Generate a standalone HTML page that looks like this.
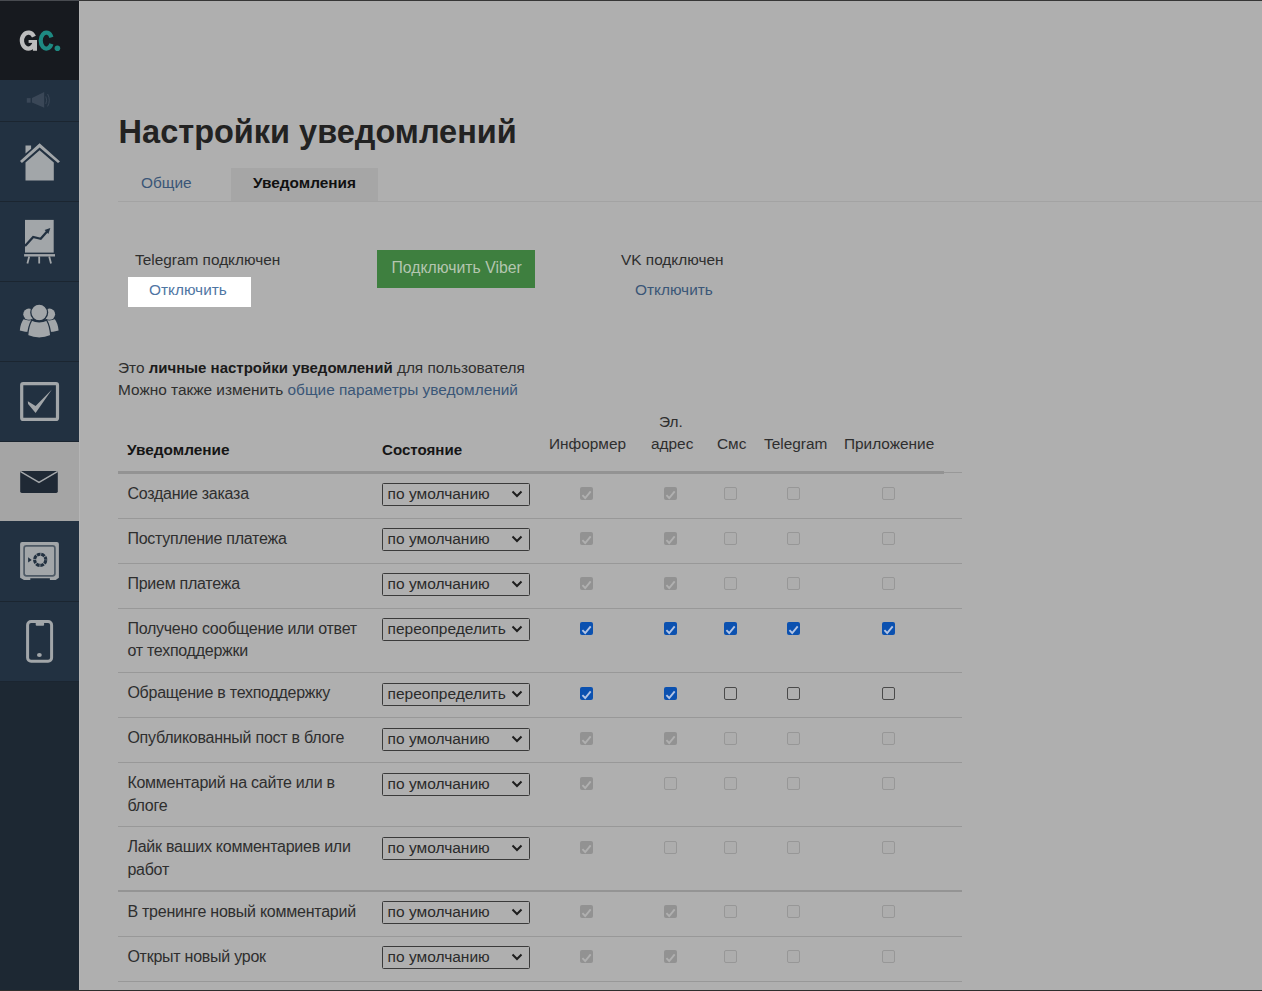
<!DOCTYPE html>
<html><head><meta charset="utf-8">
<style>
*{box-sizing:border-box;margin:0;padding:0}
html,body{width:1262px;height:991px;overflow:hidden;background:#afafaf;font-family:"Liberation Sans",sans-serif;color:#2e2e2e}
.abs{position:absolute;white-space:nowrap}
#topline{position:absolute;left:0;top:0;width:1262px;height:1px;background:#363636}
#botline{position:absolute;left:0;top:990px;width:1262px;height:1px;background:#2e2e2e}
#side{position:absolute;left:0;top:1px;width:79px;height:989px;background:#1d2833}
.si{position:absolute;left:0;width:79px;background:#223141;border-bottom:1px solid #1b2530}
.si svg{position:absolute;left:0;top:0}
#logo{position:absolute;left:0;top:1px;width:79px;height:79px;background:#171a1f}
#vline{position:absolute;left:79px;top:1px;width:1px;height:989px;background:#b5b5b5}
.t15{font-size:15.4px;line-height:18px}
.link{color:#3a5677}
.b{font-weight:bold;color:#161616}
b{color:#1a1a1a}
.hline{position:absolute;left:118px;width:844px;height:1px;background:#989898}
.sel{position:absolute;left:382px;width:148px;height:23px;border:1px solid #3a3a3a;border-radius:1.5px}
.sel span{position:absolute;left:4.6px;top:1px;font-size:15.5px;white-space:nowrap;color:#2a2a2a}
.sel svg{position:absolute;left:128.3px;top:6px}
.lab{font-size:16px;letter-spacing:-0.25px;line-height:22.5px;white-space:nowrap;color:#2e2e2e}
.cb{position:absolute;width:13px;height:13px;border-radius:2px}
.cbd{border:1px solid #979797;background:#adadad}
.cbdc{background:#929292}
.cbon{background:#0b51b0}
.cboff{border:1px solid #4a4a4a;background:#afafaf}
</style></head><body>
<div id="topline"></div><div style="position:absolute;left:0;top:0;width:79px;height:1px;background:#484b50"></div>
<div id="side"></div>
<div id="logo">
 <svg width="79" height="79" viewBox="0 1 79 79" style="position:absolute;left:0;top:0">
  <path d="M33.94 36.62 A6.45 7.95 0 1 0 34.66 42.25" fill="none" stroke="#bdbdbd" stroke-width="4.3"/>
  <rect x="28.6" y="40" width="8.4" height="2.9" fill="#bdbdbd"/>
  <rect x="32.9" y="40" width="4.1" height="10.75" fill="#bdbdbd"/>
  <path d="M51.42 37.35 A5.6 8 0 1 0 51.42 43.85" fill="none" stroke="#1e8a82" stroke-width="4.2"/>
  <circle cx="57.4" cy="48.3" r="2.8" fill="#1e8a82"/>
 </svg>
</div>
<div class="si" style="top:80px;height:42px">
 <svg width="79" height="41" viewBox="0 0 79 41">
  <rect x="26.8" y="18.1" width="3.8" height="4.6" fill="#3a4757"/>
  <path d="M32 18.1 L44.2 12.1 L44.2 27.7 L32 22.6 Z" fill="#3a4757"/>
  <path d="M45.8 16.5 Q47.6 20.2 45.8 24" fill="none" stroke="#3a4757" stroke-width="1"/>
  <path d="M47.6 14 Q51 20.2 47.6 26.4" fill="none" stroke="#3a4757" stroke-width="1"/>
 </svg>
</div>
<div class="si" style="top:122px;height:80px">
 <svg width="79" height="79" viewBox="0 0 79 79">
  <path d="M25.5 23.5 L31.1 23.5 L31.1 26.8 L25.5 31.5 Z" fill="#a2a6a9"/>
  <path d="M20 39.1 L39.6 21.3 L60 39.4 L58 41.1 L39.6 25.6 L21.9 41.1 Z" fill="#a2a6a9"/>
  <path d="M25.5 40.4 L39.6 28.3 L53.8 40.4 L53.8 58.5 L25.5 58.5 Z" fill="#a2a6a9"/>
 </svg>
</div>
<div class="si" style="top:202px;height:80px">
 <svg width="79" height="79" viewBox="0 0 79 79">
  <rect x="25" y="17.9" width="28.7" height="32.7" fill="#a2a6a9"/>
  <rect x="24.1" y="52.1" width="30.9" height="2.4" fill="#a2a6a9"/>
  <path d="M29.2 54.5 L27.4 61.5 M39.2 54.5 L39.2 61.5 M49.2 54.5 L51 61.5" stroke="#a2a6a9" stroke-width="1.8"/>
  <path d="M25 44 L33.2 35 L40.7 36.8 L47.5 29" fill="none" stroke="#223141" stroke-width="2.3"/>
  <path d="M50.3 26.1 L44.6 28.1 L48.4 31.9 Z" fill="#223141"/>
 </svg>
</div>
<div class="si" style="top:282px;height:80px">
 <svg width="79" height="79" viewBox="0 0 79 79">
  <circle cx="28.9" cy="32.2" r="5.6" fill="#a2a6a9"/>
  <circle cx="49.5" cy="32.2" r="5.6" fill="#a2a6a9"/>
  <path d="M23.6 37.3 Q28.9 39.5 33 37.5 L31 50 Q25 50 19.8 48.4 Q20.6 41 23.6 37.3 Z" fill="#a2a6a9"/>
  <path d="M54.8 37.3 Q49.5 39.5 45.4 37.5 L47.4 50 Q53.4 50 58.6 48.4 Q57.8 41 54.8 37.3 Z" fill="#a2a6a9"/>
  <path d="M31.7 38.2 Q39.2 41.6 46.7 38.2 Q50 44 50.8 53.6 Q39.2 58.6 27.6 53.6 Q28.4 44 31.7 38.2 Z" fill="#a2a6a9" stroke="#223141" stroke-width="1.3"/>
  <circle cx="39.2" cy="30.4" r="8.4" fill="#a2a6a9" stroke="#223141" stroke-width="1.3"/>
 </svg>
</div>
<div class="si" style="top:362px;height:80px">
 <svg width="79" height="79" viewBox="0 0 79 79">
  <rect x="21.7" y="21.6" width="35.8" height="35.8" rx="1.5" fill="none" stroke="#a2a6a9" stroke-width="3.2"/>
  <path d="M27.8 39.2 L35.6 44 L51.9 27.6 L35.6 51 L28.1 42 Z" fill="#a2a6a9"/>
 </svg>
</div>
<div class="si" style="top:442px;height:79px;background:#a5a5a5;border:none">
 <svg width="79" height="79" viewBox="0 0 79 79">
  <rect x="20.2" y="28.9" width="37.6" height="22" rx="1.6" fill="#1f2935"/>
  <path d="M20.6 29.6 L39 40.4 L57.4 29.6" fill="none" stroke="#a5a8ab" stroke-width="1.4"/>
 </svg>
</div>
<div class="si" style="top:521px;height:81px">
 <svg width="79" height="80" viewBox="0 0 79 80">
  <path d="M22.1 20.9 L56.9 20.9 Q58.9 20.9 58.9 22.9 L58.9 56.7 L55.7 58.9 L49.9 58.9 L49.9 57.2 L30.3 57.2 L30.3 58.9 L24 58.9 L20.1 56.7 L20.1 22.9 Q20.1 20.9 22.1 20.9 Z" fill="#a2a6a9"/>
  <rect x="24.1" y="24.9" width="30.8" height="29.9" rx="2.3" fill="none" stroke="#4e5a66" stroke-width="1.7"/>
  <circle cx="40.2" cy="38.8" r="5.6" fill="none" stroke="#223141" stroke-width="3.1" stroke-dasharray="3.65 0.75" stroke-dashoffset="4.025"/>
  <path d="M28.1 36.2 L28.1 41.6 L31.7 38.9 Z" fill="#223141"/>
 </svg>
</div>
<div class="si" style="top:602px;height:80px">
 <svg width="79" height="79" viewBox="0 0 79 79">
  <rect x="27.6" y="19.6" width="24" height="39.7" rx="3.5" fill="none" stroke="#a2a6a9" stroke-width="3"/>
  <path d="M35.7 19.8 L44.1 19.8 L44.1 22.8 Q44.1 23.8 43.1 23.8 L36.7 23.8 Q35.7 23.8 35.7 22.8 Z" fill="#a2a6a9"/>
  <ellipse cx="39.4" cy="52.9" rx="2.4" ry="2" fill="#a2a6a9"/>
 </svg>
</div>
<div id="vline"></div>
<div id="botline"></div>

<!-- main -->
<div class="abs b" style="left:118.6px;top:113.5px;font-size:32.5px;color:#222">Настройки уведомлений</div>
<div class="abs" style="left:231px;top:168px;width:147px;height:33px;background:#a6a6a6"></div>
<div class="abs t15 link" style="left:141px;top:174px">Общие</div>
<div class="abs t15 b" style="left:253px;top:174px;color:#111">Уведомления</div>
<div class="hline" style="left:118px;top:201px;width:1144px;background:#a3a3a3"></div>

<div class="abs t15" style="left:135px;top:251px">Telegram подключен</div>
<div class="abs" style="left:128px;top:277px;width:123px;height:30px;background:#fff"></div>
<div class="abs t15" style="left:149px;top:281px;color:#4f76a3">Отключить</div>
<div class="abs" style="left:377px;top:250px;width:158px;height:38px;background:#3e7f3f"></div>
<div class="abs t15" style="left:391.5px;top:259px;color:#b4c6b0;font-size:15.8px">Подключить Viber</div>
<div class="abs t15" style="left:621px;top:251px">VK подключен</div>
<div class="abs t15 link" style="left:635px;top:281px">Отключить</div>

<div class="abs t15" style="left:118px;top:359px">Это <b style="font-size:15px">личные настройки уведомлений</b> для пользователя</div>
<div class="abs t15" style="left:118px;top:381px">Можно также изменить <span class="link">общие параметры уведомлений</span></div>

<div class="abs t15 b" style="left:127px;top:441px">Уведомление</div>
<div class="abs t15 b" style="left:382px;top:441px;font-size:15.1px">Состояние</div>
<div class="abs t15" style="left:549px;top:435px">Информер</div>
<div class="abs t15" style="left:659px;top:413px">Эл.</div>
<div class="abs t15" style="left:651px;top:435px">адрес</div>
<div class="abs t15" style="left:717px;top:435px">Смс</div>
<div class="abs t15" style="left:764px;top:435px">Telegram</div>
<div class="abs t15" style="left:844px;top:435px">Приложение</div>
<div class="hline" style="left:118px;top:472px;width:844px"></div>
<div class="abs" style="left:118px;top:471px;width:826px;height:3px;background:#939393"></div>

<div id="rows">
<div class="hline" style="top:518px;height:1px"></div>
<div class="hline" style="top:563px;height:1px"></div>
<div class="hline" style="top:608px;height:1px"></div>
<div class="hline" style="top:672px;height:1px"></div>
<div class="hline" style="top:717px;height:1px"></div>
<div class="hline" style="top:762px;height:1px"></div>
<div class="hline" style="top:826px;height:1px"></div>
<div class="hline" style="top:890px;height:2px;background:#949494"></div>
<div class="hline" style="top:936px;height:1px"></div>
<div class="hline" style="top:981px;height:1px"></div>
<div class="abs lab" style="left:127.4px;top:483.0px">Создание заказа</div>
<div class="sel" style="top:483px"><span>по умолчанию</span><svg width="12" height="8" viewBox="0 0 12 8"><path d="M1.5 1.5 L6 6 L10.5 1.5" fill="none" stroke="#1e1e1e" stroke-width="2"/></svg></div>
<div class="cb cbdc" style="left:580px;top:487px"><svg width="13" height="13" viewBox="0 0 13 13"><path d="M2.4 7.2 L5.2 10 L10.7 3.4" fill="none" stroke="#b0b0b0" stroke-width="1.9"/></svg></div>
<div class="cb cbdc" style="left:664px;top:487px"><svg width="13" height="13" viewBox="0 0 13 13"><path d="M2.4 7.2 L5.2 10 L10.7 3.4" fill="none" stroke="#b0b0b0" stroke-width="1.9"/></svg></div>
<div class="cb cbd" style="left:724px;top:487px"></div>
<div class="cb cbd" style="left:787px;top:487px"></div>
<div class="cb cbd" style="left:882px;top:487px"></div>
<div class="abs lab" style="left:127.4px;top:528.0px">Поступление платежа</div>
<div class="sel" style="top:528px"><span>по умолчанию</span><svg width="12" height="8" viewBox="0 0 12 8"><path d="M1.5 1.5 L6 6 L10.5 1.5" fill="none" stroke="#1e1e1e" stroke-width="2"/></svg></div>
<div class="cb cbdc" style="left:580px;top:532px"><svg width="13" height="13" viewBox="0 0 13 13"><path d="M2.4 7.2 L5.2 10 L10.7 3.4" fill="none" stroke="#b0b0b0" stroke-width="1.9"/></svg></div>
<div class="cb cbdc" style="left:664px;top:532px"><svg width="13" height="13" viewBox="0 0 13 13"><path d="M2.4 7.2 L5.2 10 L10.7 3.4" fill="none" stroke="#b0b0b0" stroke-width="1.9"/></svg></div>
<div class="cb cbd" style="left:724px;top:532px"></div>
<div class="cb cbd" style="left:787px;top:532px"></div>
<div class="cb cbd" style="left:882px;top:532px"></div>
<div class="abs lab" style="left:127.4px;top:573.0px">Прием платежа</div>
<div class="sel" style="top:573px"><span>по умолчанию</span><svg width="12" height="8" viewBox="0 0 12 8"><path d="M1.5 1.5 L6 6 L10.5 1.5" fill="none" stroke="#1e1e1e" stroke-width="2"/></svg></div>
<div class="cb cbdc" style="left:580px;top:577px"><svg width="13" height="13" viewBox="0 0 13 13"><path d="M2.4 7.2 L5.2 10 L10.7 3.4" fill="none" stroke="#b0b0b0" stroke-width="1.9"/></svg></div>
<div class="cb cbdc" style="left:664px;top:577px"><svg width="13" height="13" viewBox="0 0 13 13"><path d="M2.4 7.2 L5.2 10 L10.7 3.4" fill="none" stroke="#b0b0b0" stroke-width="1.9"/></svg></div>
<div class="cb cbd" style="left:724px;top:577px"></div>
<div class="cb cbd" style="left:787px;top:577px"></div>
<div class="cb cbd" style="left:882px;top:577px"></div>
<div class="abs lab" style="left:127.4px;top:618px">Получено сообщение или ответ</div>
<div class="abs lab" style="left:127.4px;top:640px">от техподдержки</div>
<div class="sel" style="top:618px"><span>переопределить</span><svg width="12" height="8" viewBox="0 0 12 8"><path d="M1.5 1.5 L6 6 L10.5 1.5" fill="none" stroke="#1e1e1e" stroke-width="2"/></svg></div>
<div class="cb cbon" style="left:580px;top:622px"><svg width="13" height="13" viewBox="0 0 13 13"><path d="M2.4 7.2 L5.2 10 L10.7 3.4" fill="none" stroke="#b3c4e4" stroke-width="1.9"/></svg></div>
<div class="cb cbon" style="left:664px;top:622px"><svg width="13" height="13" viewBox="0 0 13 13"><path d="M2.4 7.2 L5.2 10 L10.7 3.4" fill="none" stroke="#b3c4e4" stroke-width="1.9"/></svg></div>
<div class="cb cbon" style="left:724px;top:622px"><svg width="13" height="13" viewBox="0 0 13 13"><path d="M2.4 7.2 L5.2 10 L10.7 3.4" fill="none" stroke="#b3c4e4" stroke-width="1.9"/></svg></div>
<div class="cb cbon" style="left:787px;top:622px"><svg width="13" height="13" viewBox="0 0 13 13"><path d="M2.4 7.2 L5.2 10 L10.7 3.4" fill="none" stroke="#b3c4e4" stroke-width="1.9"/></svg></div>
<div class="cb cbon" style="left:882px;top:622px"><svg width="13" height="13" viewBox="0 0 13 13"><path d="M2.4 7.2 L5.2 10 L10.7 3.4" fill="none" stroke="#b3c4e4" stroke-width="1.9"/></svg></div>
<div class="abs lab" style="left:127.4px;top:682.0px">Обращение в техподдержку</div>
<div class="sel" style="top:683px"><span>переопределить</span><svg width="12" height="8" viewBox="0 0 12 8"><path d="M1.5 1.5 L6 6 L10.5 1.5" fill="none" stroke="#1e1e1e" stroke-width="2"/></svg></div>
<div class="cb cbon" style="left:580px;top:687px"><svg width="13" height="13" viewBox="0 0 13 13"><path d="M2.4 7.2 L5.2 10 L10.7 3.4" fill="none" stroke="#b3c4e4" stroke-width="1.9"/></svg></div>
<div class="cb cbon" style="left:664px;top:687px"><svg width="13" height="13" viewBox="0 0 13 13"><path d="M2.4 7.2 L5.2 10 L10.7 3.4" fill="none" stroke="#b3c4e4" stroke-width="1.9"/></svg></div>
<div class="cb cboff" style="left:724px;top:687px"></div>
<div class="cb cboff" style="left:787px;top:687px"></div>
<div class="cb cboff" style="left:882px;top:687px"></div>
<div class="abs lab" style="left:127.4px;top:727.0px">Опубликованный пост в блоге</div>
<div class="sel" style="top:728px"><span>по умолчанию</span><svg width="12" height="8" viewBox="0 0 12 8"><path d="M1.5 1.5 L6 6 L10.5 1.5" fill="none" stroke="#1e1e1e" stroke-width="2"/></svg></div>
<div class="cb cbdc" style="left:580px;top:732px"><svg width="13" height="13" viewBox="0 0 13 13"><path d="M2.4 7.2 L5.2 10 L10.7 3.4" fill="none" stroke="#b0b0b0" stroke-width="1.9"/></svg></div>
<div class="cb cbdc" style="left:664px;top:732px"><svg width="13" height="13" viewBox="0 0 13 13"><path d="M2.4 7.2 L5.2 10 L10.7 3.4" fill="none" stroke="#b0b0b0" stroke-width="1.9"/></svg></div>
<div class="cb cbd" style="left:724px;top:732px"></div>
<div class="cb cbd" style="left:787px;top:732px"></div>
<div class="cb cbd" style="left:882px;top:732px"></div>
<div class="abs lab" style="left:127.4px;top:772px">Комментарий на сайте или в</div>
<div class="abs lab" style="left:127.4px;top:795px">блоге</div>
<div class="sel" style="top:773px"><span>по умолчанию</span><svg width="12" height="8" viewBox="0 0 12 8"><path d="M1.5 1.5 L6 6 L10.5 1.5" fill="none" stroke="#1e1e1e" stroke-width="2"/></svg></div>
<div class="cb cbdc" style="left:580px;top:777px"><svg width="13" height="13" viewBox="0 0 13 13"><path d="M2.4 7.2 L5.2 10 L10.7 3.4" fill="none" stroke="#b0b0b0" stroke-width="1.9"/></svg></div>
<div class="cb cbd" style="left:664px;top:777px"></div>
<div class="cb cbd" style="left:724px;top:777px"></div>
<div class="cb cbd" style="left:787px;top:777px"></div>
<div class="cb cbd" style="left:882px;top:777px"></div>
<div class="abs lab" style="left:127.4px;top:836px">Лайк ваших комментариев или</div>
<div class="abs lab" style="left:127.4px;top:859px">работ</div>
<div class="sel" style="top:837px"><span>по умолчанию</span><svg width="12" height="8" viewBox="0 0 12 8"><path d="M1.5 1.5 L6 6 L10.5 1.5" fill="none" stroke="#1e1e1e" stroke-width="2"/></svg></div>
<div class="cb cbdc" style="left:580px;top:841px"><svg width="13" height="13" viewBox="0 0 13 13"><path d="M2.4 7.2 L5.2 10 L10.7 3.4" fill="none" stroke="#b0b0b0" stroke-width="1.9"/></svg></div>
<div class="cb cbd" style="left:664px;top:841px"></div>
<div class="cb cbd" style="left:724px;top:841px"></div>
<div class="cb cbd" style="left:787px;top:841px"></div>
<div class="cb cbd" style="left:882px;top:841px"></div>
<div class="abs lab" style="left:127.4px;top:901.0px">В тренинге новый комментарий</div>
<div class="sel" style="top:901px"><span>по умолчанию</span><svg width="12" height="8" viewBox="0 0 12 8"><path d="M1.5 1.5 L6 6 L10.5 1.5" fill="none" stroke="#1e1e1e" stroke-width="2"/></svg></div>
<div class="cb cbdc" style="left:580px;top:905px"><svg width="13" height="13" viewBox="0 0 13 13"><path d="M2.4 7.2 L5.2 10 L10.7 3.4" fill="none" stroke="#b0b0b0" stroke-width="1.9"/></svg></div>
<div class="cb cbdc" style="left:664px;top:905px"><svg width="13" height="13" viewBox="0 0 13 13"><path d="M2.4 7.2 L5.2 10 L10.7 3.4" fill="none" stroke="#b0b0b0" stroke-width="1.9"/></svg></div>
<div class="cb cbd" style="left:724px;top:905px"></div>
<div class="cb cbd" style="left:787px;top:905px"></div>
<div class="cb cbd" style="left:882px;top:905px"></div>
<div class="abs lab" style="left:127.4px;top:946.0px">Открыт новый урок</div>
<div class="sel" style="top:946px"><span>по умолчанию</span><svg width="12" height="8" viewBox="0 0 12 8"><path d="M1.5 1.5 L6 6 L10.5 1.5" fill="none" stroke="#1e1e1e" stroke-width="2"/></svg></div>
<div class="cb cbdc" style="left:580px;top:950px"><svg width="13" height="13" viewBox="0 0 13 13"><path d="M2.4 7.2 L5.2 10 L10.7 3.4" fill="none" stroke="#b0b0b0" stroke-width="1.9"/></svg></div>
<div class="cb cbdc" style="left:664px;top:950px"><svg width="13" height="13" viewBox="0 0 13 13"><path d="M2.4 7.2 L5.2 10 L10.7 3.4" fill="none" stroke="#b0b0b0" stroke-width="1.9"/></svg></div>
<div class="cb cbd" style="left:724px;top:950px"></div>
<div class="cb cbd" style="left:787px;top:950px"></div>
<div class="cb cbd" style="left:882px;top:950px"></div>
</div>
</body></html>
